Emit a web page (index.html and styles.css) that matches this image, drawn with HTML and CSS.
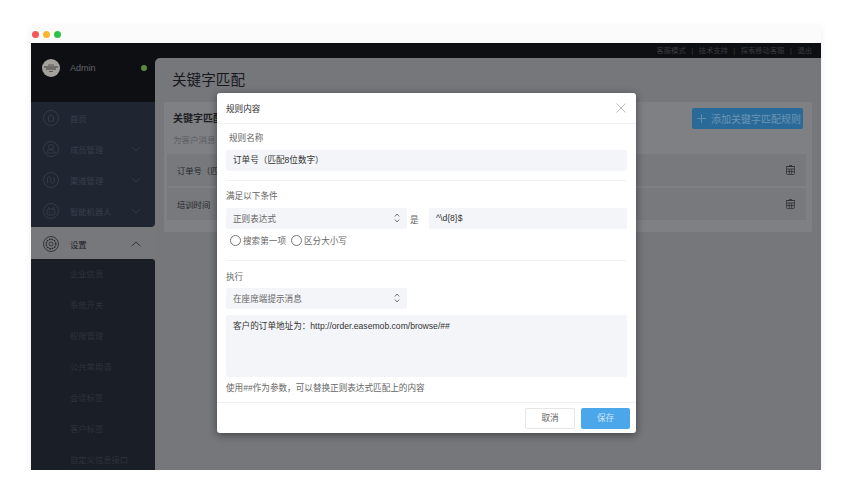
FILE: index.html
```html
<!DOCTYPE html>
<html lang="zh-CN">
<head>
    <meta charset="UTF-8">
    <title>关键字匹配</title>
    <link rel="stylesheet" href="styles.css">
</head>
<body>
    <div class="window">
        <div class="titlebar">
            <span class="light red"></span>
            <span class="light yellow"></span>
            <span class="light green"></span>
        </div>

        <div class="topbar">
            <span>客服模式</span><span>|</span>
            <span>技术支持</span><span>|</span>
            <span>探索移动客服</span><span>|</span>
            <span>退出</span>
        </div>

        <div class="layout">
            <div class="sidebar">
                <div class="user">
                    <svg class="avatar" viewBox="0 0 18 18">
                        <circle cx="9" cy="9" r="9" fill="#a3a19b"/>
                        <path d="M2 8h14M4 10h10" stroke="#3a3936" stroke-width="1" fill="none"/>
                        <path d="M6 6h6M7 12.500h4" stroke="#5a5854" stroke-width="1" fill="none"/>
                    </svg>
                    <span class="user-name">Admin</span>
                    <span class="user-dot"></span>
                </div>

                <div class="menu">
                    <div class="menu-item">
                        <svg class="menu-icon" viewBox="0 0 16 16">
                            <circle cx="8" cy="8" r="7.500"/>
                            <path d="M4.500 8 8 4.800 11.500 8M5.500 7.500V11.200h5V7.500"/>
                        </svg>
                        <span>首页</span>
                    </div>
                    <div class="menu-item">
                        <svg class="menu-icon" viewBox="0 0 16 16">
                            <circle cx="8" cy="8" r="7.500"/>
                            <circle cx="8" cy="6" r="2.500"/>
                            <path d="M3.500 12c.6-2.200 2.400-3.200 4.500-3.200s3.900 1 4.500 3.200z"/>
                        </svg>
                        <span>成员管理</span>
                        <svg class="chevron" viewBox="0 0 10 6"><path d="M.5.800 5 5 9.500.800"/></svg>
                    </div>
                    <div class="menu-item">
                        <svg class="menu-icon" viewBox="0 0 16 16">
                            <circle cx="8" cy="8" r="7.500"/>
                            <path d="M4.500 11V6.500a1.700 1.700 0 0 1 3.400 0v3a1.700 1.700 0 0 0 3.400 0V5"/>
                        </svg>
                        <span>渠道管理</span>
                        <svg class="chevron" viewBox="0 0 10 6"><path d="M.5.800 5 5 9.500.800"/></svg>
                    </div>
                    <div class="menu-item">
                        <svg class="menu-icon" viewBox="0 0 16 16">
                            <circle cx="8" cy="8" r="7.500"/>
                            <rect x="4" y="6" width="8" height="6" rx="2"/>
                            <path d="M6 6 5 4M10 6l1-2M6 9h1M9 9h1"/>
                        </svg>
                        <span>智能机器人</span>
                        <svg class="chevron" viewBox="0 0 10 6"><path d="M.5.800 5 5 9.500.800"/></svg>
                    </div>
                </div>

                <div class="menu-item active">
                    <svg class="menu-icon" viewBox="0 0 16 16">
                        <circle cx="8" cy="8" r="7.500"/>
                        <circle class="gear" cx="8" cy="8" r="4.800"/>
                        <circle cx="8" cy="8" r="2"/>
                    </svg>
                    <span>设置</span>
                    <svg class="chevron" viewBox="0 0 10 6"><path d="M.5 5.200 5 1l4.500 4.200"/></svg>
                </div>

                <div class="submenu">
                    <div class="sub-item">企业信息</div>
                    <div class="sub-item">系统开关</div>
                    <div class="sub-item">权限管理</div>
                    <div class="sub-item">公共常用语</div>
                    <div class="sub-item">会话标签</div>
                    <div class="sub-item">客户标签</div>
                    <div class="sub-item">自定义信息接口</div>
                </div>
            </div>

            <div class="main">
                <h1 class="page-title">关键字匹配</h1>
                <div class="card">
                    <div class="card-head">
                        <div>
                            <div class="card-title">关键字匹配规则</div>
                            <div class="card-desc">为客户消息</div>
                        </div>
                        <div class="add-btn">
                            <svg class="plus" viewBox="0 0 9 9"><path d="M4.500 0v9M0 4.500h9"/></svg>
                            <span>添加关键字匹配规则</span>
                        </div>
                    </div>
                    <div class="rule-row">
                        <span>订单号（匹配8位数字）</span>
                        <svg class="trash" viewBox="0 0 9 10">
                            <rect x=".5" y="1.500" width="8" height="8" rx="1"/>
                            <path d="M0 1.500h9M3 .5h3M1 4h7M1 6.500h7M3.300 4v5M5.700 4v5"/>
                        </svg>
                    </div>
                    <div class="rule-row">
                        <span>培训时间</span>
                        <svg class="trash" viewBox="0 0 9 10">
                            <rect x=".5" y="1.500" width="8" height="8" rx="1"/>
                            <path d="M0 1.500h9M3 .5h3M1 4h7M1 6.500h7M3.300 4v5M5.700 4v5"/>
                        </svg>
                    </div>
                </div>
            </div>
        </div>

        <div class="modal">
            <div class="modal-head">
                <span>规则内容</span>
                <svg class="close" viewBox="0 0 10 10"><path d="M.5.500l9 9M9.500.500l-9 9"/></svg>
            </div>

            <div class="modal-section name-section">
                <div class="label indent">规则名称</div>
                <div class="field">订单号（匹配8位数字）</div>
            </div>

            <div class="modal-section cond-section">
                <div class="label">满足以下条件</div>
                <div class="cond-row">
                    <div class="select">
                        <span>正则表达式</span>
                        <svg class="updown" viewBox="0 0 6 10"><path d="M.8 3.500 3 1l2.200 2.500M.8 6.500 3 9l2.200-2.500"/></svg>
                    </div>
                    <span class="is">是</span>
                    <div class="field regex">^\d{8}$</div>
                </div>
                <div class="radios">
                    <span class="radio"></span><span>搜索第一项</span>
                    <span class="radio"></span><span>区分大小写</span>
                </div>
            </div>

            <div class="modal-section exec-section">
                <div class="label">执行</div>
                <div class="select">
                    <span>在座席端提示消息</span>
                    <svg class="updown" viewBox="0 0 6 10"><path d="M.8 3.500 3 1l2.200 2.500M.8 6.500 3 9l2.200-2.500"/></svg>
                </div>
                <div class="textarea">客户的订单地址为：http://order.easemob.com/browse/##</div>
                <div class="hint">使用##作为参数，可以替换正则表达式匹配上的内容</div>
            </div>

            <div class="modal-foot">
                <div class="btn cancel">取消</div>
                <div class="btn save">保存</div>
            </div>
        </div>
    </div>
</body>
</html>
```

FILE: styles.css
```css
* {
    box-sizing: border-box;
}

body {
    margin: 0;
    padding: 25px 31px 0;
    background-color: #fff;
    font-family: "Liberation Sans", "Noto Sans CJK SC", sans-serif;
    font-size: 8.6px;
    color: #555;
}

.window {
    position: relative;
    width: 790px;
    height: 445px;
    overflow: hidden;
    box-shadow: 0 2px 7px rgba(0, 0, 0, 0.07);
}

.titlebar {
    height: 18px;
    padding-left: 1px;
    background-color: #fbfbfb;
    display: flex;
    align-items: center;
    gap: 4px;
}

.light {
    width: 7px;
    height: 7px;
    border-radius: 50%;
}

.red { background-color: #f4555a; }
.yellow { background-color: #f6b62e; }
.green { background-color: #2fc14a; }

.topbar {
    height: 15px;
    padding-right: 9px;
    display: flex;
    justify-content: flex-end;
    gap: 5.5px;
    background-color: #0e0f13;
    color: #3a3b40;
    font-size: 7.3px;
    line-height: 15px;
}

.layout {
    display: flex;
    height: 412px;
    background-color: #0e0f13;
}

/* 左侧菜单 */
.sidebar {
    width: 124px;
    flex-shrink: 0;
    background-color: #77787c;
}

.user {
    height: 44px;
    padding: 1px 9px 25px 11px;
    display: flex;
    align-items: center;
    background-color: #0e0f13;
    color: #62646a;
}

.avatar {
    width: 18px;
    height: 18px;
}

.user-name {
    margin-left: 10px;
    font-size: 9px;
}

.user-dot {
    width: 6px;
    height: 6px;
    margin-left: auto;
    margin-right: -1px;
    border-radius: 50%;
    background-color: #5b8a3c;
}

.menu {
    height: 125px;
    background-color: #1f2632;
    border-bottom-right-radius: 4px;
}

.menu-item {
    height: 31px;
    padding: 0 14px 0 12px;
    display: flex;
    align-items: center;
    color: #393e49;
    font-size: 8.3px;
}

.menu-icon {
    width: 16px;
    height: 16px;
    margin-right: 11px;
    flex-shrink: 0;
    fill: none;
    stroke: #3b404b;
    stroke-width: 0.8;
}

.chevron {
    width: 10px;
    height: 6px;
    margin-left: auto;
    fill: none;
    stroke: #393e49;
    stroke-width: 0.8;
}

.active {
    height: 33px;
    color: #1d1e22;
}

.active .menu-icon,
.active .chevron {
    stroke: #24252a;
}

.gear {
    stroke-width: 1.4;
    stroke-dasharray: 1.6 0.9;
}

.submenu {
    height: 211px;
    margin-top: -1px;
    background-color: #1a1e27;
    border-top-right-radius: 3px;
}

.sub-item {
    height: 31px;
    padding-left: 39px;
    line-height: 30px;
    color: #2f333b;
    font-size: 8.3px;
    white-space: nowrap;
}

/* 右侧内容 */
.main {
    flex: 1;
    padding: 0 9px;
    background-color: #76777b;
    border-top-left-radius: 5px;
    color: #26272b;
}

.page-title {
    margin: 0;
    padding: 12px 0 0 8px;
    height: 44px;
    font-size: 14.6px;
    font-weight: normal;
    line-height: 20px;
    color: #17181b;
}

.card {
    height: 130px;
    padding: 6px 6px 0 3px;
    background-color: #7f8084;
    border-radius: 2px;
}

.card-head {
    height: 46px;
    padding: 0 3px 0 6px;
    display: flex;
    justify-content: space-between;
}

.card-title {
    margin-top: 4px;
    font-size: 10px;
    font-weight: bold;
    line-height: 14px;
    color: #1d1e22;
}

.card-desc {
    margin-top: 7px;
    font-size: 8.5px;
    color: #5c5d61;
}

.add-btn {
    width: 111px;
    height: 21px;
    padding-left: 5px;
    display: flex;
    align-items: center;
    gap: 5px;
    background-color: #2a6a98;
    border-radius: 2px;
    color: #6a95b5;
    font-size: 10px;
    white-space: nowrap;
}

.plus {
    width: 9px;
    height: 9px;
    fill: none;
    stroke: #6a95b5;
    stroke-width: 0.8;
}

.rule-row {
    height: 32px;
    margin-bottom: 2px;
    padding: 0 11px 0 10px;
    display: flex;
    align-items: center;
    justify-content: space-between;
    background-color: #78797d;
    font-size: 8.3px;
}

.trash {
    width: 9px;
    height: 10px;
    fill: none;
    stroke: #2f3034;
    stroke-width: 0.8;
}

/* 弹窗 */
.modal {
    position: absolute;
    left: 186px;
    top: 68px;
    width: 419px;
    height: 340px;
    padding: 0 9px;
    background-color: #fff;
    border-radius: 3px;
    box-shadow: 0 2px 8px rgba(0, 0, 0, 0.45);
}

.modal-head {
    height: 31px;
    margin: 0 -9px;
    padding: 0 9px;
    display: flex;
    align-items: center;
    justify-content: space-between;
    border-bottom: 1px solid #f1f1f3;
    color: #333;
}

.close {
    width: 10px;
    height: 10px;
    margin-right: 1px;
    fill: none;
    stroke: #a8a8a8;
    stroke-width: 0.8;
}

.modal-section {
    border-bottom: 1px solid #f1f1f3;
}

.name-section {
    height: 57px;
    padding-top: 7px;
}

.cond-section {
    height: 80px;
    padding-top: 8px;
}

.exec-section {
    height: 142px;
    margin: 0 -9px;
    padding: 9px 9px 0;
}

.label {
    height: 14px;
    line-height: 14px;
    color: #666;
}

.indent {
    padding-left: 3px;
}

.field {
    height: 21px;
    margin-top: 5px;
    padding-left: 7px;
    background-color: #f4f5f8;
    border-radius: 2px;
    line-height: 21px;
    color: #333;
}

.cond-row {
    height: 21px;
    margin-top: 5px;
    display: flex;
    align-items: center;
}

.select {
    width: 181px;
    height: 21px;
    padding: 0 7px 1px;
    display: flex;
    align-items: center;
    justify-content: space-between;
    background-color: #f4f5f8;
    border-radius: 2px;
    color: #666;
}

.exec-section .select {
    margin-top: 4px;
}

.updown {
    width: 6px;
    height: 10px;
    fill: none;
    stroke: #555;
    stroke-width: 0.8;
}

.is {
    width: 22px;
    padding-left: 3px;
    color: #666;
}

.regex {
    flex: 1;
    margin-top: 0;
    padding-left: 7px;
}

.radios {
    margin-top: 5px;
    padding-left: 4px;
    height: 12px;
    display: flex;
    align-items: center;
    color: #666;
}

.radio {
    width: 11px;
    height: 11px;
    margin-right: 2px;
    border: 1px solid #777;
    border-radius: 50%;
}

.radios span:nth-child(3) {
    margin-left: 5px;
}

.textarea {
    height: 62px;
    margin-top: 6px;
    padding: 4px 7px;
    background-color: #f4f5f8;
    border-radius: 3px;
    color: #333;
}

.hint {
    margin-top: 5px;
    line-height: 12px;
    color: #666;
}

.modal-foot {
    height: 31px;
    margin-right: -3px;
    padding-top: 5px;
    display: flex;
    justify-content: flex-end;
    gap: 6px;
}

.btn {
    height: 21px;
    width: 49px;
    border-radius: 2px;
    line-height: 21px;
    text-align: center;
}

.cancel {
    width: 50px;
    border: 1px solid #e6e6e6;
    line-height: 19px;
    color: #666;
}

.save {
    background-color: #4ba6ea;
    color: #cfe7fa;
}
```
